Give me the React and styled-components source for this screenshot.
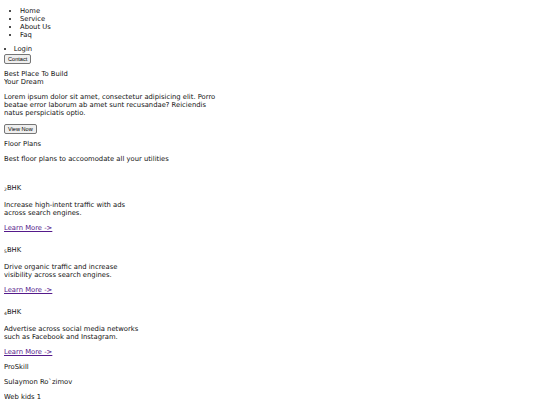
import React from "react";
import styled, { createGlobalStyle } from "styled-components";

const GlobalStyle = createGlobalStyle`
  html, body {
    background: #ffffff;
  }
  body {
    margin: 4px;
    font-family: "DejaVu Sans", Verdana, sans-serif;
    font-size: 6.8px;
    line-height: 8px;
    color: #111111;
  }
  p {
    margin: 7px 0;
  }
`;

const NavList = styled.ul`
  margin: 3px 0 6px;
  padding-left: 16px;
  list-style: disc;
`;

const NavItem = styled.li`
  line-height: 8px;
`;

const LoginList = styled.ul`
  margin: 0 0 1px;
  padding: 0;
  list-style: disc inside;
`;

const Button = styled.button`
  display: block;
  font-family: "Liberation Sans", Arial, sans-serif;
  font-size: 5.6px;
  line-height: 6px;
  padding: 1px 3px;
  color: #000;
  background: #efefef;
  border: 1px solid #767676;
  border-radius: 2px;
`;

const Hero = styled.section`
  width: 220px;
`;

const Title = styled.p`
  margin: 6px 0 7px;
`;

const CardList = styled.div`
  padding-top: 7px;
`;

const Card = styled.article`
  width: 140px;
  padding-top: 1px;
`;

const CardTitle = styled.p`
  margin: 6px 0 9px;
`;

const Count = styled.sub`
  font-size: 4.5px;
  line-height: 0;
  vertical-align: -1px;
`;

const CardLink = styled.a`
  color: #551a8b;
  text-decoration: underline;
`;

const Footer = styled.footer``;

const plans = [
  { n: 2, text: ["Increase high-intent traffic with ads", "across search engines."] },
  { n: 5, text: ["Drive organic traffic and increase", "visibility across search engines."] },
  { n: 4, text: ["Advertise across social media networks", "such as Facebook and Instagram."] },
];

export default function App() {
  return (
    <>
      <GlobalStyle />
      <header>
        <nav>
          <NavList>
            <NavItem>Home</NavItem>
            <NavItem>Service</NavItem>
            <NavItem>About Us</NavItem>
            <NavItem>Faq</NavItem>
          </NavList>
          <LoginList>
            <NavItem>Login</NavItem>
          </LoginList>
        </nav>
        <Button>Contact</Button>
      </header>
      <Hero>
        <Title>
          Best Place To Build
          <br />
          Your Dream
        </Title>
        <p>
          Lorem ipsum dolor sit amet, consectetur adipisicing elit. Porro beatae error laborum ab amet sunt
          recusandae? Reiciendis natus perspiciatis optio.
        </p>
        <Button>View Now</Button>
      </Hero>
      <section>
        <Title>Floor Plans</Title>
        <p>Best floor plans to accoomodate all your utilities</p>
        <CardList>
          {plans.map((plan) => (
            <Card key={plan.n}>
              <CardTitle>
                <Count>{plan.n}</Count>BHK
              </CardTitle>
              <p>
                {plan.text[0]}
                <br />
                {plan.text[1]}
              </p>
              <p>
                <CardLink href="#">Learn More -&gt;</CardLink>
              </p>
            </Card>
          ))}
        </CardList>
      </section>
      <Footer>
        <p>ProSkill</p>
        <p>Sulaymon Ro`zimov</p>
        <p>Web kids 1</p>
      </Footer>
    </>
  );
}
